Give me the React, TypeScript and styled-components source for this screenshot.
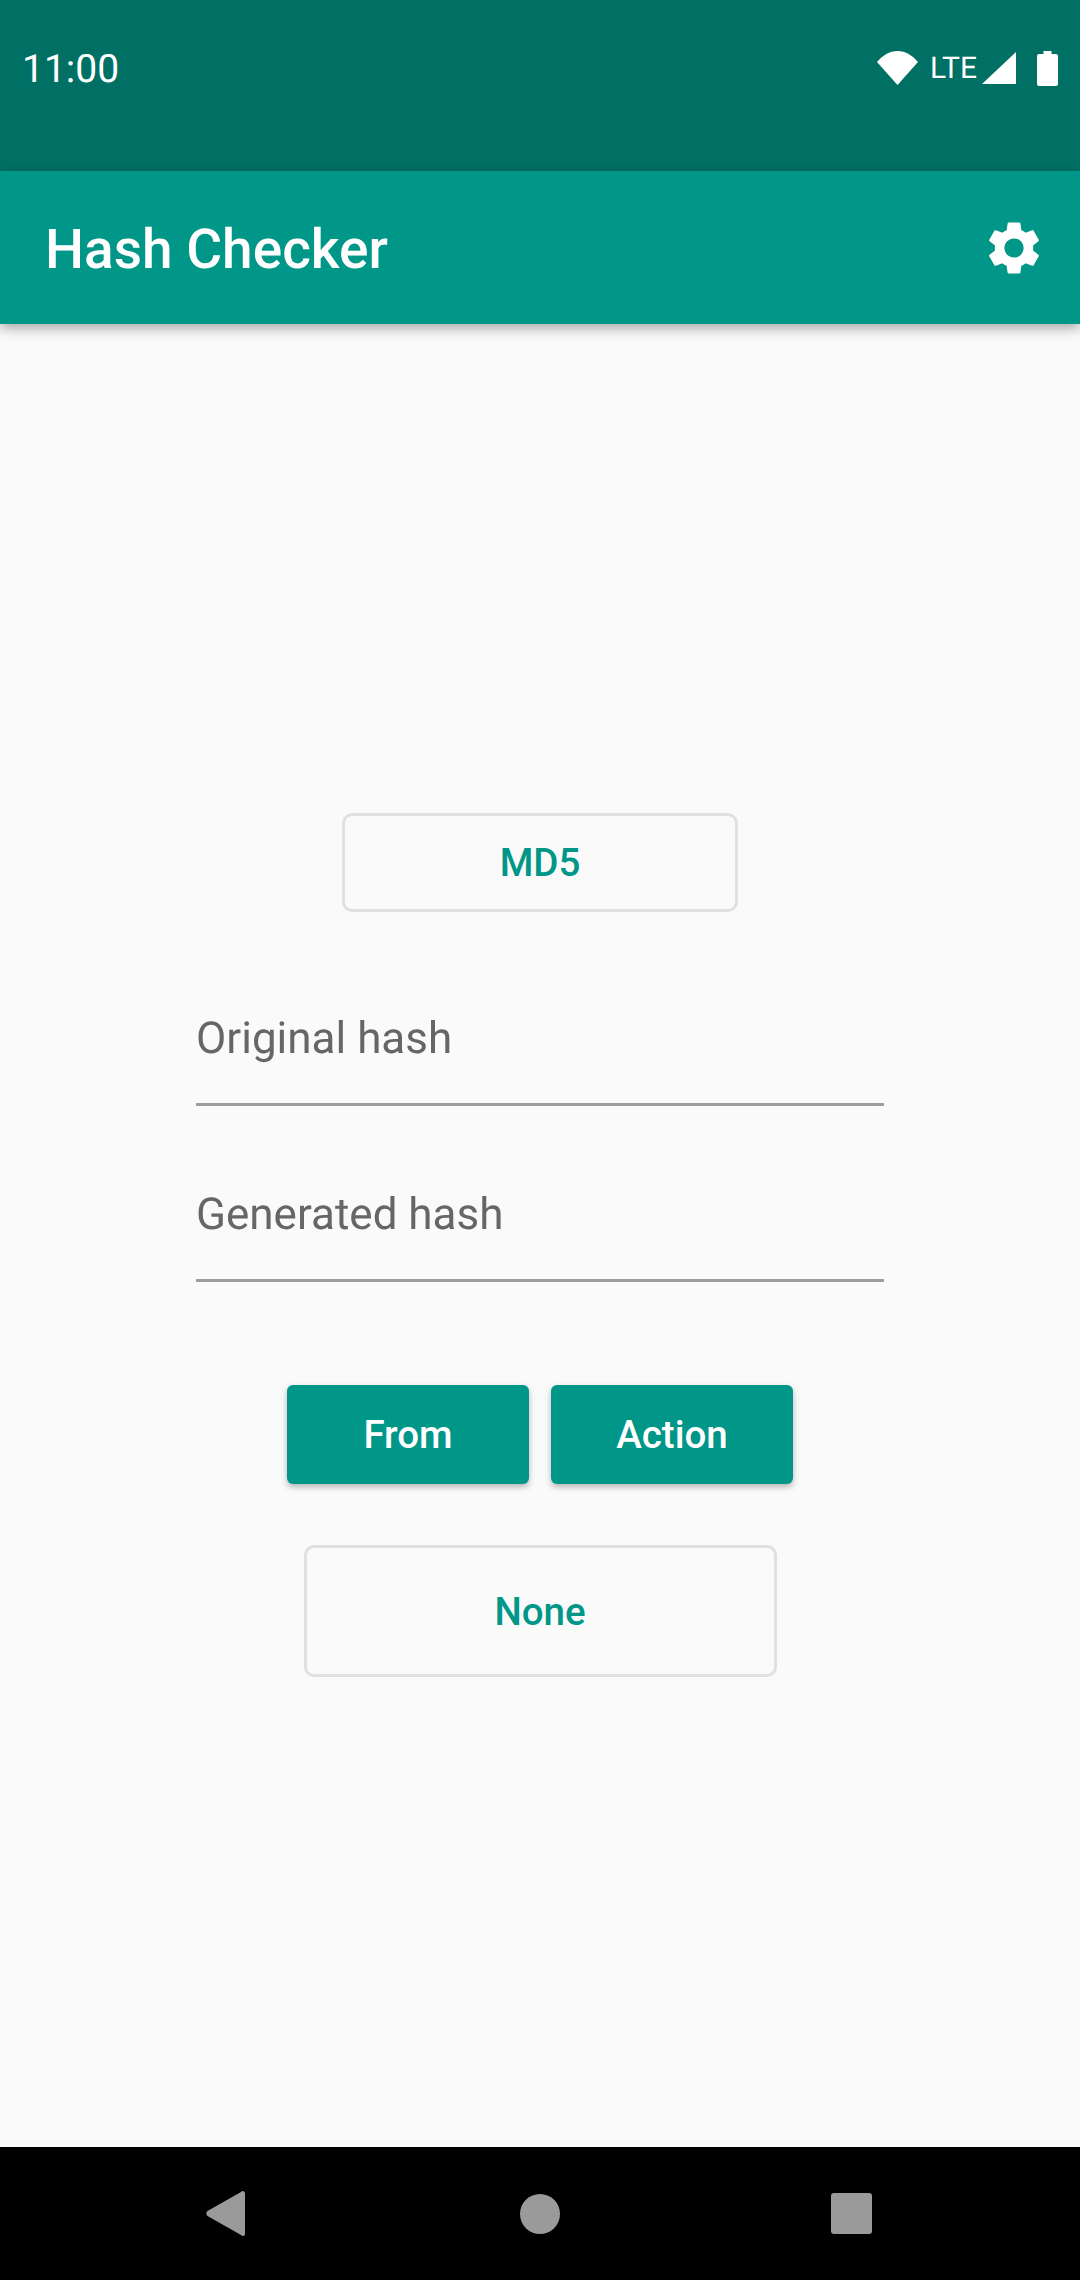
import React from "react";
import styled, { createGlobalStyle } from "styled-components";

const GlobalStyle = createGlobalStyle`
  html, body {
    margin: 0;
    padding: 0;
    background: #fafafa;
  }
  * {
    box-sizing: border-box;
  }
`;

const Screen = styled.div`
  display: flex;
  flex-direction: column;
  width: 1080px;
  height: 2280px;
  overflow: hidden;
  font-family: Roboto, "Liberation Sans", sans-serif;
  text-rendering: geometricPrecision;
  background: #fafafa;
`;

const StatusBar = styled.div`
  display: flex;
  align-items: flex-start;
  justify-content: space-between;
  height: 171px;
  padding: 46px 22px 0;
  color: #ffffff;
  background: #007064;
`;

const Time = styled.span`
  font-size: 39px;
  line-height: 47px;
`;

const StatusIcons = styled.div`
  display: flex;
  align-items: center;
  height: 38px;
  margin-top: 3px;

  & > svg:last-child {
    margin-left: 21px;
  }
`;

const Lte = styled.span`
  font-size: 30px;
  line-height: 38px;
  margin: 2px 5px 0 12px;
`;

const AppBar = styled.header`
  position: relative;
  z-index: 1;
  display: flex;
  align-items: center;
  justify-content: space-between;
  height: 153px;
  padding: 0 34px 0 45px;
  background: #009688;
  box-shadow: 0 4px 12px rgba(0, 0, 0, 0.34);
`;

const Title = styled.h1`
  margin: 4px 0 0;
  font-size: 55px;
  font-weight: 500;
  color: #ffffff;
`;

const Main = styled.main`
  flex: 1;
  display: flex;
  flex-direction: column;
  align-items: center;
  padding-top: 489px;
`;

const OutlineButton = styled.button<{ $width: number; $height: number }>`
  width: ${(p) => p.$width}px;
  height: ${(p) => p.$height}px;
  border: 3px solid #e0e0e0;
  border-radius: 10px;
  background: transparent;
  color: #009688;
  font-family: inherit;
  font-size: 38.5px;
  font-weight: 500;
`;

const Field = styled.div`
  display: flex;
  align-items: center;
  width: 688px;
  height: 121px;
  padding-bottom: 12px;
  border-bottom: 3px solid #9e9e9e;
  font-size: 44px;
  color: #666666;
  will-change: transform;
`;

const Fields = styled.div`
  display: flex;
  flex-direction: column;
  gap: 55px;
  margin-top: 73px;
`;

const ButtonRow = styled.div`
  display: flex;
  gap: 22px;
  margin-top: 103px;
`;

const FilledButton = styled.button`
  width: 242px;
  height: 99px;
  border: none;
  border-radius: 6px;
  background: #009688;
  color: #ffffff;
  font-family: inherit;
  font-size: 38.5px;
  font-weight: 500;
  box-shadow: 0 3px 6px rgba(0, 0, 0, 0.28);
`;

const NoneWrap = styled.div`
  margin-top: 61px;
`;

const NavBar = styled.nav`
  display: grid;
  grid-template-columns: 1fr auto 1fr;
  align-items: center;
  height: 133px;
  padding: 0 208px 0 206px;
  background: #000000;

  & > svg:nth-child(2) {
    margin-left: 2px;
  }

  & > svg:last-child {
    justify-self: end;
  }
`;

function WifiIcon() {
  return (
    <svg width="41" height="34" viewBox="0 0 41 34">
      <path d="M20.5 34 0 11C5.5 4.5 12.5 0 20.5 0s15 4.5 20.5 11z" fill="#fff" />
    </svg>
  );
}

function SignalIcon() {
  return (
    <svg width="34" height="32" viewBox="0 0 34 32">
      <path d="M34 0v32H0z" fill="#fff" />
    </svg>
  );
}

function BatteryIcon() {
  return (
    <svg width="21" height="35" viewBox="0 0 21 35">
      <path
        d="M6.5 0h8v3h4.500a2 2 0 0 1 2 2v28a2 2 0 0 1-2 2H2a2 2 0 0 1-2-2V5a2 2 0 0 1 2-2h4.5z"
        fill="#fff"
      />
    </svg>
  );
}

function GearIcon() {
  return (
    <svg width="64" height="64" viewBox="0 0 24 24">
      <path
        d="M19.14 12.94c.04-.3.06-.61.06-.94 0-.32-.02-.64-.07-.94l2.03-1.58a.49.49 0 0 0 .12-.61l-1.92-3.32a.49.49 0 0 0-.59-.22l-2.39.96c-.5-.38-1.03-.7-1.62-.94l-.36-2.54a.48.48 0 0 0-.48-.41h-3.84c-.24 0-.43.17-.47.41l-.36 2.54c-.59.24-1.13.57-1.62.94l-2.39-.96c-.22-.08-.47 0-.59.22L2.74 8.87c-.12.21-.08.47.12.61l2.03 1.58c-.05.3-.09.63-.09.94s.02.64.07.94l-2.03 1.58a.49.49 0 0 0-.12.61l1.92 3.32c.12.22.37.29.59.22l2.39-.96c.5.38 1.03.7 1.62.94l.36 2.54c.05.24.24.41.48.41h3.84c.24 0 .44-.17.47-.41l.36-2.54c.59-.24 1.13-.56 1.62-.94l2.39.96c.22.08.47 0 .59-.22l1.92-3.32c.12-.22.07-.47-.12-.61l-2.01-1.58zM12 15.6c-1.98 0-3.6-1.62-3.6-3.6s1.62-3.6 3.6-3.6 3.6 1.62 3.6 3.6-1.62 3.6-3.6 3.6z"
        fill="#fff"
      />
    </svg>
  );
}

function BackIcon() {
  return (
    <svg width="39" height="45" viewBox="0 0 39 45">
      <path
        d="M35 1a2.2 2.2 0 0 1 4 1.5v40a2.2 2.2 0 0 1-4 1.5L1.5 25a3.3 3.3 0 0 1 0-5z"
        fill="#9a9a9a"
      />
    </svg>
  );
}

function HomeIcon() {
  return (
    <svg width="40" height="40" viewBox="0 0 40 40">
      <circle cx="20" cy="20" r="20" fill="#9a9a9a" />
    </svg>
  );
}

function RecentsIcon() {
  return (
    <svg width="41" height="41" viewBox="0 0 41 41">
      <rect width="41" height="41" rx="3" fill="#9a9a9a" />
    </svg>
  );
}

export default function App() {
  return (
    <Screen>
      <GlobalStyle />
      <StatusBar>
        <Time>11:00</Time>
        <StatusIcons>
          <WifiIcon />
          <Lte>LTE</Lte>
          <SignalIcon />
          <BatteryIcon />
        </StatusIcons>
      </StatusBar>
      <AppBar>
        <Title>Hash Checker</Title>
        <GearIcon />
      </AppBar>
      <Main>
        <OutlineButton $width={396} $height={99}>
          MD5
        </OutlineButton>
        <Fields>
          <Field>Original hash</Field>
          <Field>Generated hash</Field>
        </Fields>
        <ButtonRow>
          <FilledButton>From</FilledButton>
          <FilledButton>Action</FilledButton>
        </ButtonRow>
        <NoneWrap>
          <OutlineButton $width={473} $height={132}>
            None
          </OutlineButton>
        </NoneWrap>
      </Main>
      <NavBar>
        <BackIcon />
        <HomeIcon />
        <RecentsIcon />
      </NavBar>
    </Screen>
  );
}
